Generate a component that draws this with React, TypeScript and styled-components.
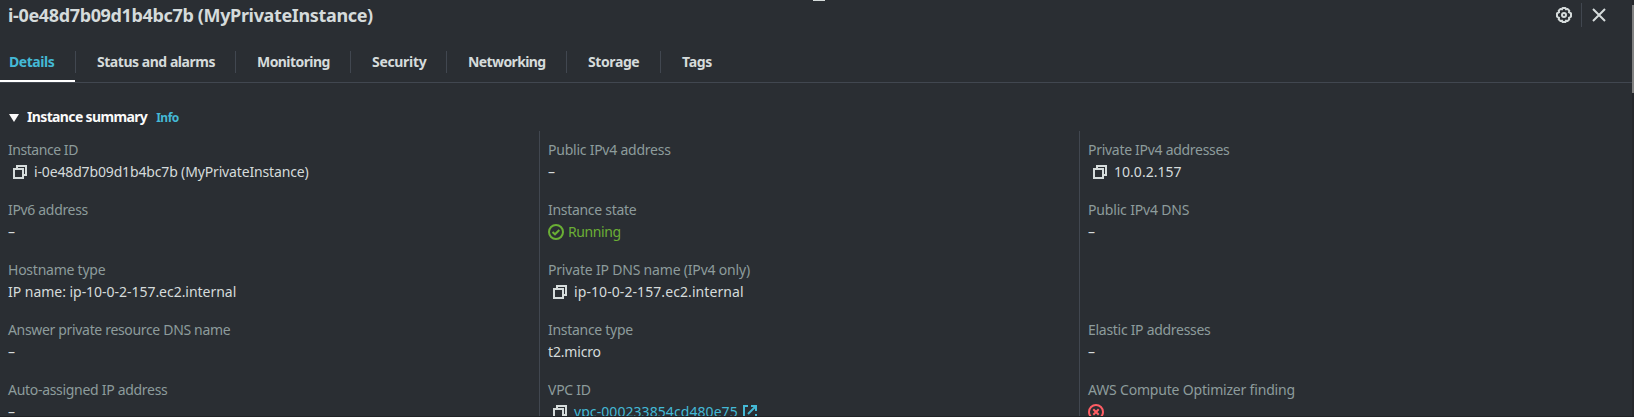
import React from 'react';
import styled, { createGlobalStyle } from 'styled-components';

const color = {
  bg: '#2a2e33',
  line: '#414750',
  text: '#d5dbdb',
  label: '#8d9c9c',
  bright: '#fafafa',
  link: '#44b9d6',
  success: '#6aaf35',
  error: '#ff5d64',
};

const GlobalStyle = createGlobalStyle`
  *, *::before, *::after { box-sizing: border-box; }
  body {
    margin: 0;
    overflow: hidden;
    background: ${color.bg};
    color: ${color.text};
    font: 400 14px/20px "Noto Sans", "Open Sans", sans-serif;
  }
`;

const Panel = styled.section`
  position: relative;
  display: flex;
  height: 417px;
  overflow: hidden;
  border-bottom: 1px solid #1f2226;
`;

const Main = styled.div`
  flex: 1;
  min-width: 0;
`;

const ResizeHandle = styled.span`
  position: absolute;
  top: 0;
  left: 813px;
  width: 12px;
  height: 1px;
  background: ${color.text};
`;

const ScrollTrack = styled.div`
  flex: none;
  width: 2px;
  padding-top: 5px;
  background: #25272b;
`;

const ScrollThumb = styled.div`
  height: 88px;
  background: #818181;
`;

const Header = styled.header`
  display: flex;
  align-items: center;
  height: 30px;
  padding: 0 25px 0 8px;
`;

const Title = styled.h1`
  flex: 1;
  margin: 0;
  padding-bottom: 1px;
  font-size: 18px;
  font-weight: 700;
  line-height: 22px;
  letter-spacing: -0.35px;
`;

const IconButton = styled.button`
  display: flex;
  padding: 0;
  border: 0;
  background: none;
  color: ${color.text};
`;

const HeaderDivider = styled.span`
  width: 1px;
  height: 24px;
  margin: 0 9px;
  background: ${color.line};
`;

const Tabs = styled.nav`
  display: flex;
  height: 53px;
  border-bottom: 1px solid ${color.line};
`;

const Tab = styled.a<{ $width: number; $tracking: number; $active?: boolean }>`
  display: flex;
  align-items: center;
  width: ${p => p.$width}px;
  height: 52px;
  padding: ${p => (p.$active ? '14px 0 0 9px' : '12px 0 0 21px')};
  border-bottom: ${p => (p.$active ? '2px solid #fff' : '0')};
  color: ${p => (p.$active ? color.link : color.text)};
  font-weight: 700;
  letter-spacing: ${p => p.$tracking}px;
  white-space: nowrap;
`;

const TabDivider = styled.span`
  width: 1px;
  height: 22px;
  margin-top: 21px;
  background: ${color.line};
`;

const SectionHeader = styled.div`
  display: flex;
  align-items: baseline;
  height: 48px;
  padding: 24px 0 0 9px;
`;

const Caret = styled.svg`
  width: 10px;
  height: 8px;
  margin-right: 8px;
  fill: ${color.bright};
`;

const SectionTitle = styled.h2`
  margin: 0;
  color: ${color.bright};
  font-size: 14px;
  font-weight: 700;
  line-height: 20px;
  letter-spacing: -0.64px;
`;

const InfoLink = styled.a`
  margin-left: 9px;
  color: ${color.link};
  font-size: 12px;
  font-weight: 700;
  letter-spacing: -0.5px;
`;

const Columns = styled.div`
  display: grid;
  grid-template-columns: 539px 540px 1fr;
  height: 300px;
`;

const Column = styled.dl`
  display: grid;
  grid-auto-rows: 60px;
  margin: 0;
  padding: 9px 0 0 8px;
  overflow: hidden;

  & + & {
    border-left: 1px solid ${color.line};
  }
`;

const Field = styled.div`
  white-space: nowrap;
`;

const Label = styled.dt<{ $tracking: number }>`
  color: ${color.label};
  letter-spacing: ${p => p.$tracking}px;
`;

const Value = styled.dd<{ $tracking?: number; $tone?: string }>`
  display: flex;
  align-items: center;
  height: 20px;
  margin: 2px 0 0;
  color: ${p => p.$tone || color.text};
  letter-spacing: ${p => p.$tracking || 0}px;
`;

const CopyIcon = styled.svg`
  width: 14px;
  height: 14px;
  margin: 0 7px 0 5px;
  fill: none;
  stroke: ${color.text};
  stroke-width: 2;
`;

const StatusIcon = styled.svg`
  width: 16px;
  height: 16px;
  margin-right: 4px;
  fill: none;
  stroke: currentColor;
  stroke-width: 2;
`;

const ExternalIcon = styled.svg`
  width: 14px;
  height: 14px;
  margin-left: 5px;
  fill: none;
  stroke: currentColor;
  stroke-width: 2;
`;

const Copy = () => (
  <CopyIcon viewBox="0 0 14 14">
    <path d="M1 4h9v9H1z" />
    <path d="M4 4V1h9v9h-3" />
  </CopyIcon>
);

const External = () => (
  <ExternalIcon viewBox="0 0 14 14">
    <path d="M5 1H1v12h12V9" />
    <path d="M8 1h5v5M13 1L5 9" />
  </ExternalIcon>
);

const Gear = () => (
  <svg width="16" height="16" viewBox="0 0 16 16" fill="none" stroke="currentColor" strokeWidth="2" strokeLinejoin="round">
    <path d="M6.600 1h2.800l.6 1.400 1.500-.5 1.800 1.800-.4 1.500L15 6.400v3.200l-2.100 1.200.4 1.500-1.800 1.800-1.500-.5L9.400 15H6.600L6 13.600l-1.500.5-1.800-1.800.4-1.500L1 9.600V6.400l2.100-1.200-.4-1.500 1.800-1.800 1.500.5z" />
    <circle cx="8" cy="8" r="2" />
  </svg>
);

const Close = () => (
  <svg width="16" height="16" viewBox="0 0 16 16" fill="none" stroke="currentColor" strokeWidth="2">
    <path d="M2 2l12 12M14 2L2 14" />
  </svg>
);

type Item = {
  label: string;
  tracking: number;
  value?: string;
  valueTracking?: number;
  kind?: 'copy' | 'running' | 'link' | 'error';
};

const tabs = [
  { name: 'Details', width: 75, tracking: -0.45 },
  { name: 'Status and alarms', width: 159, tracking: -0.46 },
  { name: 'Monitoring', width: 114, tracking: -0.57 },
  { name: 'Security', width: 95, tracking: -0.32 },
  { name: 'Networking', width: 119, tracking: -0.6 },
  { name: 'Storage', width: 93, tracking: -0.4 },
  { name: 'Tags', width: 72, tracking: -0.3 },
];

const columns: (Item | null)[][] = [
  [
    { label: 'Instance ID', tracking: -0.45, value: 'i-0e48d7b09d1b4bc7b (MyPrivateInstance)', valueTracking: -0.15, kind: 'copy' },
    { label: 'IPv6 address', tracking: -0.33, value: '–' },
    { label: 'Hostname type', tracking: -0.24, value: 'IP name: ip-10-0-2-157.ec2.internal', valueTracking: -0.03 },
    { label: 'Answer private resource DNS name', tracking: -0.33, value: '–' },
    { label: 'Auto-assigned IP address', tracking: -0.3, value: '–' },
  ],
  [
    { label: 'Public IPv4 address', tracking: -0.24, value: '–' },
    { label: 'Instance state', tracking: -0.3, value: 'Running', valueTracking: -0.42, kind: 'running' },
    { label: 'Private IP DNS name (IPv4 only)', tracking: -0.19, value: 'ip-10-0-2-157.ec2.internal', valueTracking: 0.08, kind: 'copy' },
    { label: 'Instance type', tracking: -0.29, value: 't2.micro', valueTracking: -0.17 },
    { label: 'VPC ID', tracking: -0.27, value: 'vpc-000233854cd480e75', valueTracking: 0.07, kind: 'link' },
  ],
  [
    { label: 'Private IPv4 addresses', tracking: -0.29, value: '10.0.2.157', valueTracking: 0.03, kind: 'copy' },
    { label: 'Public IPv4 DNS', tracking: -0.17, value: '–' },
    null,
    { label: 'Elastic IP addresses', tracking: -0.29, value: '–' },
    { label: 'AWS Compute Optimizer finding', tracking: -0.19, kind: 'error' },
  ],
];

const LinkText = styled.a`
  color: ${color.link};
`;

function FieldValue({ item }: { item: Item }) {
  const { kind, value, valueTracking } = item;
  if (kind === 'running') {
    return (
      <Value $tone={color.success} $tracking={valueTracking}>
        <StatusIcon viewBox="0 0 16 16">
          <circle cx="8" cy="8" r="7" />
          <path d="M4.500 8l2.500 2.300 4.300-4.300" />
        </StatusIcon>
        {value}
      </Value>
    );
  }
  if (kind === 'error') {
    return (
      <Value $tone={color.error}>
        <StatusIcon viewBox="0 0 16 16">
          <circle cx="8" cy="8" r="7" />
          <path d="M5.300 5.300l5.400 5.400M10.700 5.300l-5.400 5.400" />
        </StatusIcon>
      </Value>
    );
  }
  if (kind === 'link') {
    return (
      <Value $tone={color.link} $tracking={valueTracking}>
        <Copy />
        <LinkText>{value}</LinkText>
        <External />
      </Value>
    );
  }
  return (
    <Value $tracking={valueTracking}>
      {kind === 'copy' && <Copy />}
      {value}
    </Value>
  );
}

export default function App() {
  return (
    <>
      <GlobalStyle />
      <Panel>
        <ResizeHandle />
        <Main>
          <Header>
            <Title>i-0e48d7b09d1b4bc7b (MyPrivateInstance)</Title>
            <IconButton aria-label="Preferences"><Gear /></IconButton>
            <HeaderDivider />
            <IconButton aria-label="Close"><Close /></IconButton>
          </Header>
          <Tabs>
            {tabs.map((tab, i) => (
              <React.Fragment key={tab.name}>
                {i > 0 && <TabDivider />}
                <Tab $width={tab.width} $tracking={tab.tracking} $active={i === 0}>{tab.name}</Tab>
              </React.Fragment>
            ))}
          </Tabs>
          <SectionHeader>
            <Caret viewBox="0 0 10 8"><path d="M0 0h10L5 8z" /></Caret>
            <SectionTitle>Instance summary</SectionTitle>
            <InfoLink>Info</InfoLink>
          </SectionHeader>
          <Columns>
            {columns.map((items, c) => (
              <Column key={c}>
                {items.map((item, r) => (
                  <Field key={r}>
                    {item && (
                      <>
                        <Label $tracking={item.tracking}>{item.label}</Label>
                        <FieldValue item={item} />
                      </>
                    )}
                  </Field>
                ))}
              </Column>
            ))}
          </Columns>
        </Main>
        <ScrollTrack>
          <ScrollThumb />
        </ScrollTrack>
      </Panel>
    </>
  );
}
